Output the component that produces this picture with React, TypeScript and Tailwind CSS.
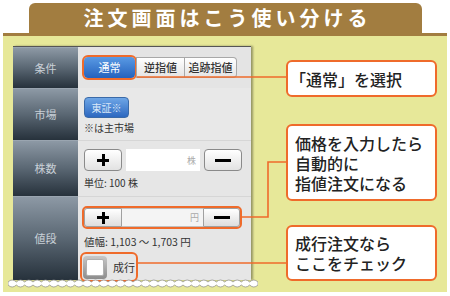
const jp = { fontFamily: '"Noto Sans CJK JP", "Noto Sans", sans-serif' };

function Label({ text }: { text: string }) {
    return (
        <div className="w-[65px] shrink-0 flex items-center justify-center bg-gradient-to-b from-[#8d99a5] via-[#5a6773] to-[#27323c] border-t border-[#9aa5b0]">
            <span className="text-[11px] text-[#c9d0d7]">{text}</span>
        </div>
    );
}

function Plus() {
    return (
        <div className="relative w-[12px] h-[12px]">
            <div className="absolute left-0 top-[4.5px] w-[12px] h-[3px] bg-black" />
            <div className="absolute top-0 left-[4.5px] w-[3px] h-[12px] bg-black" />
        </div>
    );
}

function Minus() {
    return <div className="w-[16px] h-[3px] bg-black" />;
}

function Wave() {
    // white torn edge along the bottom of the screenshot
    const n = 30;
    const w = 250;
    const step = w / n;
    let top = `M0 3`;
    for (let i = 0; i < n; i++) {
        top += ` q${step / 2} -4 ${step} 0`;
    }
    let bottom = ``;
    for (let i = 0; i < n; i++) {
        bottom += ` q${-step / 2} 4 ${-step} 0`;
    }
    const d = `${top} L${w} 6 ${bottom} Z`;
    return (
        <svg width="250" height="10" viewBox="0 0 250 10" className="block -mt-[1px]">
            <path d={d} fill="#ffffff" stroke="#8a8a8a" strokeWidth="0.7" />
        </svg>
    );
}

export default function App() {
    return (
        <div className="w-[450px] h-[296px] bg-white pt-[3px] px-[3px] overflow-hidden" style={jp}>
            {/* Title tab */}
            <div className="ml-[26px] w-[393px] h-[30px] rounded-t-[6px] bg-[#a27d40] flex items-center justify-center">
                <span className="text-white font-bold text-[20px] tracking-[4px] leading-none pl-[4px]">
                    注文画面はこう使い分ける
                </span>
            </div>
            <div className="h-[3px] bg-[#a27d40]" />

            {/* Panel */}
            <div className="relative h-[256px] bg-[#e7e899] flex">
                {/* Phone screenshot */}
                <div className="w-[255px] pl-[5px] pt-[10px] flex flex-col">
                    <div className="ml-[5px] w-[238px] h-[234px] flex flex-col bg-[#e6e6e6] border-t border-[#555] shadow-[2px_0_2px_rgba(0,0,0,0.35)]">
                        {/* 条件 */}
                        <div className="h-[41px] flex">
                            <Label text="条件" />
                            <div className="flex-1 flex items-center pl-[6px] bg-[#e4e4e4]">
                                <div className="flex h-[21px]">
                                    <div className="w-[51px] rounded-[4px] bg-gradient-to-b from-[#5a9ae4] to-[#2462bd] flex items-center justify-center text-[11px] text-white outline-2 outline-[#ef6b2b] outline-offset-0">
                                        通常
                                    </div>
                                    <div className="w-[49px] ml-[1px] bg-gradient-to-b from-white to-[#e4e4e4] border border-[#a8a8a8] flex items-center justify-center text-[11px] font-medium text-[#333]">
                                        逆指値
                                    </div>
                                    <div className="w-[52px] rounded-r-[4px] bg-gradient-to-b from-white to-[#e4e4e4] border border-l-0 border-[#a8a8a8] flex items-center justify-center text-[11px] font-medium text-[#333]">
                                        追跡指値
                                    </div>
                                </div>
                            </div>
                        </div>

                        {/* 市場 */}
                        <div className="h-[53px] flex">
                            <Label text="市場" />
                            <div className="flex-1 pl-[6px] pt-[9px] bg-[#e8e8e8]">
                                <div className="w-[45px] h-[21px] rounded-[4px] bg-gradient-to-b from-[#6ea6e6] to-[#2d68c0] border border-[#3a6aa8] flex items-center justify-center text-[10px] text-[#dbe8f8]">
                                    東証※
                                </div>
                                <div className="mt-[3px] text-[10px] leading-[13px] text-[#333]">※は主市場</div>
                            </div>
                        </div>

                        {/* 株数 */}
                        <div className="h-[56px] flex">
                            <Label text="株数" />
                            <div className="flex-1 pl-[6px] pt-[8px] bg-[#e6e6e6] border-t border-[#d6d6d6]">
                                <div className="flex gap-[4px] h-[22px]">
                                    <div className="w-[38px] rounded-[4px] bg-gradient-to-b from-white to-[#e2e2e2] border border-[#8a8a8a] flex items-center justify-center">
                                        <Plus />
                                    </div>
                                    <div className="w-[74px] bg-white flex items-center justify-end pr-[4px] text-[9px] text-[#aaa]">株</div>
                                    <div className="w-[38px] rounded-[4px] bg-gradient-to-b from-white to-[#e2e2e2] border border-[#8a8a8a] flex items-center justify-center">
                                        <Minus />
                                    </div>
                                </div>
                                <div className="mt-[5px] text-[10px] leading-[13px] text-[#333]">単位: 100 株</div>
                            </div>
                        </div>

                        {/* 値段 */}
                        <div className="flex-1 flex">
                            <Label text="値段" />
                            <div className="flex-1 pl-[6px] pt-[11px] bg-[#e6e6e6] border-t border-[#d6d6d6]">
                                <div className="flex h-[19px] w-[156px] rounded-[3px] outline-2 outline-[#ef6b2b] outline-offset-0 bg-[#dcdcdc]">
                                    <div className="w-[38px] rounded-l-[3px] bg-gradient-to-b from-white to-[#dedede] border border-[#a0a0a0] flex items-center justify-center">
                                        <Plus />
                                    </div>
                                    <div className="w-[81px] bg-[#f4f4f4] border-y border-[#c0c0c0] flex items-center justify-end pr-[4px] text-[9px] text-[#aaa]">円</div>
                                    <div className="w-[37px] rounded-r-[3px] bg-gradient-to-b from-white to-[#dedede] border border-[#a0a0a0] flex items-center justify-center">
                                        <Minus />
                                    </div>
                                </div>
                                <div className="mt-[8px] text-[10.5px] leading-[13px] text-[#333]">値幅: 1,103 〜 1,703 円</div>
                                <div className="mt-[6px] -ml-[2px] w-[54px] h-[26px] rounded-[4px] outline-2 outline-[#ef6b2b] outline-offset-0 flex items-center pl-[1px]">
                                    <div className="w-[24px] h-[23px] rounded-[4px] bg-gradient-to-b from-[#c8c8c8] to-[#8c8c8c] p-[3px]">
                                        <div className="w-full h-full rounded-[2px] bg-white border border-[#b0b0b0]" />
                                    </div>
                                    <span className="ml-[6px] text-[11px] text-[#333]">成行</span>
                                </div>
                            </div>
                        </div>
                    </div>
                    <Wave />
                </div>

                {/* Callouts */}
                <div className="ml-[28px] w-[151px] pt-[24px] flex flex-col text-[16px] leading-[20px] font-medium text-[#222]">
                    <div className="h-[37px] rounded-[6px] border-2 border-[#ef6b2b] bg-white flex items-center pl-[2px]">
                        「通常」を選択
                    </div>
                    <div className="mt-[27px] h-[77px] rounded-[6px] border-2 border-[#ef6b2b] bg-white flex flex-col justify-center pl-[7px]">
                        <div>価格を入力したら</div>
                        <div>自動的に</div>
                        <div>指値注文になる</div>
                    </div>
                    <div className="mt-[24px] h-[56px] rounded-[6px] border-2 border-[#ef6b2b] bg-white flex flex-col justify-center pl-[7px]">
                        <div>成行注文なら</div>
                        <div>ここをチェック</div>
                    </div>
                </div>

                {/* Leader lines */}
                <svg className="absolute inset-0 pointer-events-none" width="444" height="256">
                    <g fill="none" stroke="#ef6b2b" strokeWidth="1.6">
                        <path d="M134 41 H284" />
                        <path d="M239 181 H265 V126 H283" />
                        <path d="M135 227 H283" />
                    </g>
                </svg>
            </div>
        </div>
    );
}
